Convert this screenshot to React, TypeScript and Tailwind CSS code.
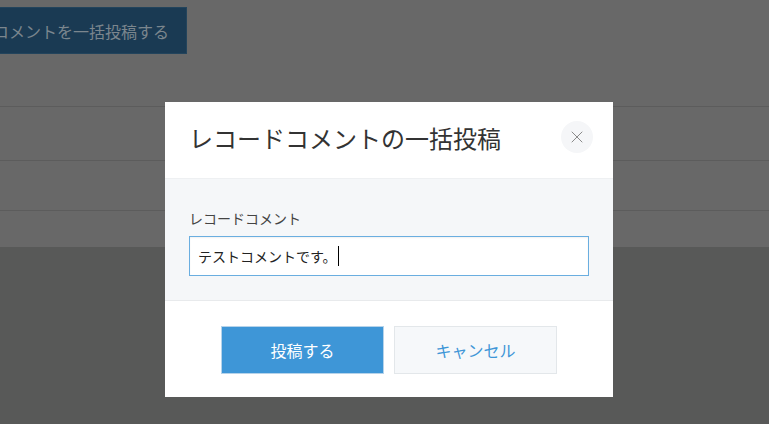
import { X } from "lucide-react";

const jp = { fontFamily: '"Noto Sans CJK JP", "Noto Sans", sans-serif' };

export default function App() {
  return (
    <div className="relative h-[424px] w-[769px] overflow-hidden bg-[#585958]" style={jp}>
      {/* dimmed page behind the dialog */}
      <div className="bg-[#686868]">
        <div className="h-[107px] border-b border-[#5c5c5c] pt-[7px]">
          <button className="ml-[-90px] flex h-[47px] items-center whitespace-nowrap border border-[#23445c] bg-[#1a3a53] pl-[18px] pr-[17px] text-[16px] text-[#7b868e]">
            レコードコメントを一括投稿する
          </button>
        </div>
        <div className="h-[54px] border-b border-[#5c5c5c]" />
        <div className="h-[50px] border-b border-[#5c5c5c]" />
        <div className="h-[36px]" />
      </div>

      {/* dialog */}
      <div className="absolute inset-0 pl-[165px] pt-[102px]">
        <div className="w-[448px] bg-white">
          <div className="flex h-[77px] items-start justify-between border-b border-[#eef0f2] pl-[24px] pr-[20px] pt-[19px]">
            <h2 className="pt-[1px] text-[24px] leading-[32px] text-[#333]">レコードコメントの一括投稿</h2>
            <button className="flex h-[32px] w-[32px] items-center justify-center rounded-full bg-[#f5f6f8] text-[#8a8a8a]">
              <X className="h-[20px] w-[20px]" strokeWidth={1.2} />
            </button>
          </div>

          <div className="border-b border-[#e8eaec] bg-[#f5f7f9] px-[24px] pb-[24px] pt-[29px]">
            <label className="block text-[14px] leading-[20px] text-[#444]">レコードコメント</label>
            <div className="mt-[8px] flex h-[40px] items-center border border-[#6aaee0] bg-white pl-[8px] text-[14px] text-[#222] shadow-[inset_0_1px_2px_rgba(0,0,0,0.06)]">
              <span>テストコメントです。</span>
              <span className="ml-[1px] h-[20px] w-px bg-black" />
            </div>
          </div>

          <div className="flex h-[96px] items-start justify-center gap-[10px] pt-[25px]">
            <button className="h-[48px] w-[163px] border border-[#b6d3ea] bg-[#3e96d7] text-[16px] text-white">投稿する</button>
            <button className="h-[48px] w-[163px] border border-[#e3e7ea] bg-[#f6f8fa] text-[16px] text-[#3e96d7]">キャンセル</button>
          </div>
        </div>
      </div>
    </div>
  );
}
